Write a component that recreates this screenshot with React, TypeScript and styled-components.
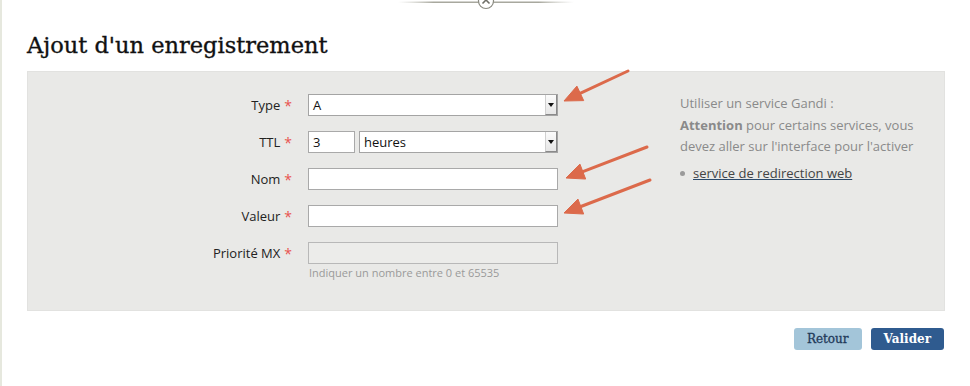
import React from "react";
import styled, { createGlobalStyle } from "styled-components";

const Global = createGlobalStyle`
  html, body { margin: 0; padding: 0; background: #fff; }
  body { font-family: "Open Sans", "Liberation Sans", sans-serif; }
`;

const Page = styled.div`
  position: relative;
  width: 970px;
  height: 386px;
  box-sizing: border-box;
  border-left: 2px solid #e6e8de;
  overflow: hidden;
`;

const TopBar = styled.div`
  height: 12px;
  display: flex;
  justify-content: center;
`;

const Title = styled.h1`
  margin: 18px 0 0 25px;
  font-family: "DejaVu Serif", "Liberation Serif", serif;
  font-weight: normal;
  font-size: 22.5px;
  line-height: 30px;
  color: #111;
  letter-spacing: 0;
  -webkit-text-stroke: 0.35px #111;
`;

const Panel = styled.div`
  margin: 11px 0 0 25px;
  width: 918px;
  height: 240px;
  box-sizing: border-box;
  background: #e9e9e7;
  border: 1px solid #e2e2e0;
  display: grid;
  grid-template-columns: 530px 1fr;
  padding-top: 22px;
`;

const Form = styled.div`
  display: grid;
  grid-template-columns: 264px 250px;
  column-gap: 16px;
  row-gap: 15px;
  align-content: start;
`;

const Label = styled.div`
  height: 22px;
  display: flex;
  align-items: center;
  justify-content: flex-end;
  font-size: 13px;
  color: #222;
`;

const Star = styled.span`
  color: #e8534f;
  margin-left: 4px;
  font-size: 14px;
`;

const Field = styled.div`
  display: flex;
  flex-direction: column;
`;

const FieldRow = styled.div`
  display: flex;
  gap: 4px;
`;

const TextInput = styled.div<{ $w?: number; $disabled?: boolean }>`
  width: ${(p) => (p.$w ? `${p.$w}px` : "250px")};
  height: 22px;
  box-sizing: border-box;
  border: 1px solid ${(p) => (p.$disabled ? "#b8b8b8" : "#a9a9a9")};
  background: ${(p) => (p.$disabled ? "#ececea" : "#fff")};
  font-size: 13px;
  line-height: 20px;
  padding-left: 4px;
  color: #111;
`;

const SelectBox = styled.div<{ $w: number }>`
  width: ${(p) => p.$w}px;
  height: 22px;
  box-sizing: border-box;
  border: 1px solid #a4a4a4;
  background: #fff;
  display: flex;
  font-size: 13px;
  line-height: 20px;
  color: #111;
`;

const SelectValue = styled.span`
  flex: 1;
  padding-left: 4px;
`;

const DropButton = styled.span`
  width: 12px;
  align-self: stretch;
  box-sizing: border-box;
  background: linear-gradient(#fbfbfb, #e6e6e6);
  border-left: 1px solid #d0d0d0;
  border-right: 1px solid #8a8a8a;
  border-bottom: 1px solid #8a8a8a;
  display: flex;
  align-items: center;
  justify-content: center;
  &::after {
    content: "";
    border-left: 3px solid transparent;
    border-right: 3px solid transparent;
    border-top: 4px solid #111;
  }
`;

const Hint = styled.div`
  margin-top: 1px;
  font-size: 11px;
  color: #9a9a9a;
  padding-left: 1px;
`;

const Info = styled.div`
  padding: 0 0 0 122px;
  font-size: 13px;
  line-height: 21.5px;
  color: #8a8a8a;
  margin-top: -1px;
`;

const InfoList = styled.ul`
  margin: 5px 0 0 0;
  padding: 0;
  list-style: none;
`;

const InfoItem = styled.li`
  display: flex;
  align-items: center;
  gap: 8px;
  &::before {
    content: "";
    width: 5px;
    height: 5px;
    border-radius: 50%;
    background: #9a9a9a;
  }
`;

const Link = styled.a`
  color: #444;
  text-decoration: underline;
  text-decoration-color: #2b4a6b;
`;

const Actions = styled.div`
  display: flex;
  justify-content: flex-end;
  gap: 9px;
  margin: 17px 26px 0 0;
`;

const Button = styled.button<{ $primary?: boolean }>`
  height: 22px;
  padding: 0 13px;
  border: none;
  border-radius: 3px;
  font-family: "DejaVu Serif", "Liberation Serif", serif;
  font-size: 12px;
  font-weight: ${(p) => (p.$primary ? "bold" : "normal")};
  -webkit-text-stroke: ${(p) => (p.$primary ? "0" : "0.3px #1f3a5a")};
  background: ${(p) => (p.$primary ? "#2f5b8f" : "#a3c5d9")};
  color: ${(p) => (p.$primary ? "#fff" : "#1f3a5a")};
  cursor: pointer;
`;

const Overlay = styled.svg`
  position: absolute;
  left: 0;
  top: 0;
  pointer-events: none;
`;

const Arrow = ({ x1, y1, x2, y2 }: { x1: number; y1: number; x2: number; y2: number }) => {
  const dx = x2 - x1;
  const dy = y2 - y1;
  const len = Math.hypot(dx, dy);
  const ux = dx / len;
  const uy = dy / len;
  const headLen = 18;
  const headW = 8;
  const bx = x2 - ux * headLen;
  const by = y2 - uy * headLen;
  const px = -uy;
  const py = ux;
  return (
    <g>
      <line x1={x1} y1={y1} x2={bx + ux * 2} y2={by + uy * 2} stroke="#dc6a4b" strokeWidth={3} strokeLinecap="round" />
      <polygon
        points={`${x2},${y2} ${bx + px * headW},${by + py * headW} ${bx - px * headW},${by - py * headW}`}
        fill="#dc6a4b"
        stroke="#dc6a4b"
        strokeWidth={1}
        strokeLinejoin="round"
      />
    </g>
  );
};

export default function App() {
  return (
    <Page>
      <Global />
      <TopBar>
        <svg width="176" height="12" viewBox="0 0 176 12">
          <defs>
            <linearGradient id="ln" x1="0" x2="1">
              <stop offset="0" stopColor="#c8c8c0" stopOpacity="0" />
              <stop offset="0.2" stopColor="#a8a89e" />
              <stop offset="0.8" stopColor="#a8a89e" />
              <stop offset="1" stopColor="#c8c8c0" stopOpacity="0" />
            </linearGradient>
          </defs>
          <rect x="0" y="1.5" width="176" height="1.5" fill="url(#ln)" />
          <circle cx="88" cy="1" r="7.5" fill="#fff" stroke="#8a8a80" strokeWidth="1.2" />
          <path d="M84.5 3.5 L88 0 L91.5 3.5" fill="none" stroke="#6e6e66" strokeWidth="1.6" />
        </svg>
      </TopBar>
      <Title>Ajout d'un enregistrement</Title>
      <Panel>
        <Form>
          <Label>
            Type<Star>*</Star>
          </Label>
          <Field>
            <SelectBox $w={250}>
              <SelectValue>A</SelectValue>
              <DropButton />
            </SelectBox>
          </Field>

          <Label>
            TTL<Star>*</Star>
          </Label>
          <FieldRow>
            <TextInput $w={47}>3</TextInput>
            <SelectBox $w={199}>
              <SelectValue>heures</SelectValue>
              <DropButton />
            </SelectBox>
          </FieldRow>

          <Label>
            Nom<Star>*</Star>
          </Label>
          <Field>
            <TextInput />
          </Field>

          <Label>
            Valeur<Star>*</Star>
          </Label>
          <Field>
            <TextInput />
          </Field>

          <Label>
            Priorité MX<Star>*</Star>
          </Label>
          <Field>
            <TextInput $disabled />
            <Hint>Indiquer un nombre entre 0 et 65535</Hint>
          </Field>
        </Form>
        <Info>
          Utiliser un service Gandi :
          <br />
          <b>Attention</b> pour certains services, vous
          <br />
          devez aller sur l'interface pour l'activer
          <InfoList>
            <InfoItem>
              <Link href="#">service de redirection web</Link>
            </InfoItem>
          </InfoList>
        </Info>
      </Panel>
      <Actions>
        <Button>Retour</Button>
        <Button $primary>Valider</Button>
      </Actions>
      <Overlay width="970" height="386">
        <Arrow x1={626} y1={71} x2={562} y2={101} />
        <Arrow x1={645} y1={147} x2={564} y2={178} />
        <Arrow x1={648} y1={180} x2={562} y2={213} />
      </Overlay>
    </Page>
  );
}
